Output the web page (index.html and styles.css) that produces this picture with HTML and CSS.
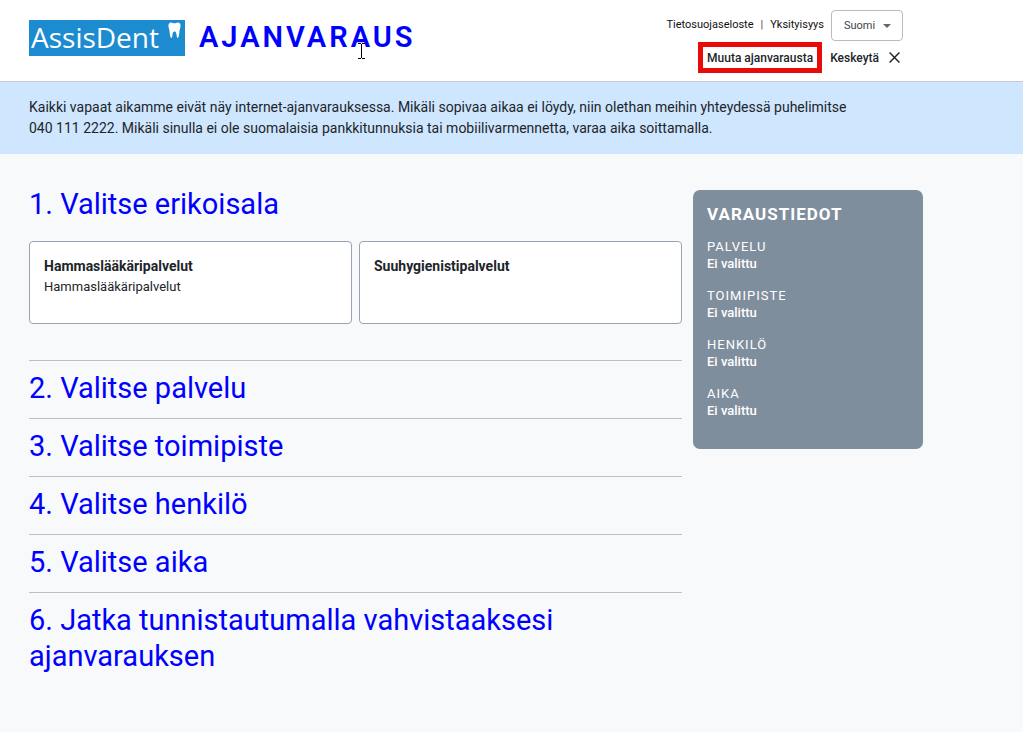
FILE: index.html
```html
<!DOCTYPE html>
<html lang="fi">
<head>
<meta charset="utf-8">
<meta name="viewport" content="width=device-width, initial-scale=1">
<title>AssisDent – Ajanvaraus</title>
<link rel="stylesheet" href="styles.css">
</head>
<body>
<header class="header">
  <div class="container header-inner">
    <div class="brand">
      <div class="logo">
        <span class="logo-text">AssisDent</span>
        <svg class="logo-tooth" viewBox="0 0 13 17" aria-hidden="true"><path d="M2.600 .5C4.200 .1 5 1.300 6.500 1.300S8.800 .1 10.400 .5C12.700 1.100 13 3.600 12.200 6C11.600 7.800 11.500 9 11.300 11C11.100 13.200 10.600 16 9.700 16C8.600 16 8.800 13.800 8.300 11.600C8 10.200 7.300 9.600 6.500 9.600S5 10.200 4.700 11.600C4.200 13.800 4.400 16 3.300 16C2.400 16 1.900 13.200 1.700 11C1.500 9 1.400 7.800 .8 6C0 3.600 .3 1.100 2.600 .5Z" fill="#fff"/></svg>
      </div>
      <h1 class="title">AJANVARAUS</h1>
      <svg class="caret" viewBox="0 0 7 16" aria-hidden="true"><path d="M0 .5h3M4 .5h3M3.500 1v14M0 15.500h3M4 15.500h3" stroke="#000" fill="none"/></svg>
    </div>
    <div class="tools">
      <div class="tools-row">
        <nav class="links">
          <a href="#">Tietosuojaseloste</a>
          <span class="bar">|</span>
          <a href="#">Yksityisyys</a>
        </nav>
        <div class="language">
          <select class="language-select" aria-label="Kieli"><option>Suomi</option></select>
          <svg class="language-arrow" viewBox="0 0 8 4" aria-hidden="true"><path d="M0 0h8L4 4z" fill="#666"/></svg>
        </div>
      </div>
      <div class="tools-row actions">
        <button class="action change" type="button">Muuta ajanvarausta</button>
        <button class="action cancel" type="button">Keskeytä
          <svg class="cross" viewBox="0 0 10 10" aria-hidden="true"><path d="M.5 .5l9 9M9.500 .5l-9 9" stroke="#222" stroke-width="1.300" fill="none"/></svg>
        </button>
      </div>
    </div>
  </div>
</header>

<div class="notice">
  <div class="container">
    <p class="notice-text">Kaikki vapaat aikamme eivät näy internet-ajanvarauksessa. Mikäli sopivaa aikaa ei löydy, niin olethan meihin yhteydessä puhelimitse 040 111 2222. Mikäli sinulla ei ole suomalaisia pankkitunnuksia tai mobiilivarmennetta, varaa aika soittamalla.</p>
  </div>
</div>

<div class="container content">
  <main class="steps">
    <section class="step step-open">
      <h2 class="step-title">1. Valitse erikoisala</h2>
      <div class="cards">
        <button class="card" type="button">
          <span class="card-title">Hammaslääkäripalvelut</span>
          <span class="card-text">Hammaslääkäripalvelut</span>
        </button>
        <button class="card" type="button">
          <span class="card-title">Suuhygienistipalvelut</span>
        </button>
      </div>
    </section>
    <section class="step"><h2 class="step-title">2. Valitse palvelu</h2></section>
    <section class="step"><h2 class="step-title">3. Valitse toimipiste</h2></section>
    <section class="step"><h2 class="step-title">4. Valitse henkilö</h2></section>
    <section class="step"><h2 class="step-title">5. Valitse aika</h2></section>
    <section class="step"><h2 class="step-title">6. Jatka tunnistautumalla vahvistaaksesi ajanvarauksen</h2></section>
  </main>
  <aside class="summary">
    <h2 class="summary-title">VARAUSTIEDOT</h2>
    <dl class="summary-list">
      <div><dt>PALVELU</dt><dd>Ei valittu</dd></div>
      <div><dt>TOIMIPISTE</dt><dd>Ei valittu</dd></div>
      <div><dt>HENKILÖ</dt><dd>Ei valittu</dd></div>
      <div><dt>AIKA</dt><dd>Ei valittu</dd></div>
    </dl>
  </aside>
</div>
</body>
</html>
```

FILE: styles.css
```css
* {
  box-sizing: border-box;
}

body {
  margin: 0;
  background: #f8f9fb;
  color: #212529;
  font-family: Roboto, "Liberation Sans", sans-serif;
}

h1, h2, p, dl, dd {
  margin: 0;
}

button {
  font-family: inherit;
  color: inherit;
  cursor: pointer;
}

.container {
  max-width: 952px;
  padding: 0 29px;
}

.header {
  background: #fff;
  border-bottom: 1px solid #c8ccd2;
}

.header-inner {
  display: flex;
  justify-content: space-between;
  padding-top: 10px;
  padding-bottom: 8px;
  padding-right: 49px;
}

.brand {
  position: relative;
  display: flex;
  align-items: flex-start;
  gap: 14px;
  padding-top: 10px;
}

.logo {
  display: flex;
  justify-content: space-between;
  width: 156px;
  height: 36px;
  padding: 2px 4px 0 2px;
  background: #1d8bcf;
}

.logo-text {
  color: #fff;
  font: 400 28px/31px "Open Sans", "Noto Sans", sans-serif;
}

.logo-tooth {
  width: 13px;
  height: 17px;
}

.title {
  color: #00f;
  font-size: 29px;
  font-weight: 600;
  line-height: 34px;
  letter-spacing: 3px;
}

.caret {
  position: absolute;
  left: 329px;
  top: 33px;
  width: 7px;
  height: 16px;
}

.tools {
  display: flex;
  flex-direction: column;
  align-items: flex-end;
  gap: 1px;
}

.tools-row {
  display: flex;
  align-items: center;
  gap: 7px;
}

.links {
  display: flex;
  gap: 7px;
  padding-bottom: 2px;
  font-size: 11px;
}

.links a {
  color: #111;
  text-decoration: none;
}

.bar {
  color: #444;
}

.language {
  position: relative;
}

.language-select {
  appearance: none;
  display: block;
  width: 72px;
  height: 31px;
  padding: 0 12px;
  border: 1px solid #bbb;
  border-radius: 4px;
  background: #fff;
  color: #444;
  font-family: inherit;
  font-size: 11px;
}

.language-arrow {
  position: absolute;
  right: 12px;
  top: 14px;
  width: 8px;
  height: 4px;
  pointer-events: none;
}

.actions {
  gap: 8px;
  padding-right: 3px;
}

.action {
  display: flex;
  align-items: center;
  padding: 0;
  border: 0;
  background: none;
  font-size: 12px;
  font-weight: 500;
}

.change {
  height: 31px;
  padding: 0 4px;
  border: 5px solid #e90a0a;
}

.cancel {
  gap: 10px;
}

.cross {
  width: 11px;
  height: 11px;
}

.notice {
  padding: 15px 0;
  background: #cfe6ff;
}

.notice-text {
  max-width: 840px;
  font-size: 14px;
  line-height: 21px;
}

.content {
  display: flex;
  align-items: flex-start;
  gap: 11px;
}

.steps {
  flex: 1;
  padding: 23px 0 48px;
}

.step {
  padding: 9px 0 12px;
  border-top: 1px solid #bdbfc3;
}

.step-open {
  padding-bottom: 36px;
  border-top: 0;
}

.step-title {
  color: #00f;
  font-size: 29px;
  font-weight: 400;
  line-height: 36px;
}

.cards {
  display: grid;
  grid-template-columns: 1fr 1fr;
  gap: 7px;
  margin-top: 19px;
}

.card {
  display: flex;
  flex-direction: column;
  align-items: flex-start;
  min-height: 83px;
  padding: 14px;
  border: 1px solid #98a4b5;
  border-radius: 4px;
  background: #fff;
  text-align: left;
}

.card-title {
  font-size: 14px;
  font-weight: 700;
  line-height: 21px;
}

.card-text {
  font-size: 13px;
  line-height: 20px;
}

.summary {
  width: 230px;
  margin-top: 36px;
  padding: 14px 14px 30px;
  border-radius: 7px;
  background: #7f8e9d;
  color: #fff;
}

.summary-title {
  margin-bottom: 14px;
  font-size: 17px;
  font-weight: 700;
  line-height: 20px;
  letter-spacing: 1px;
}

.summary-list {
  display: grid;
  gap: 15px;
  font-size: 13px;
  line-height: 17px;
}

.summary-list dt {
  letter-spacing: 1px;
}

.summary-list dd {
  font-weight: 500;
}
```
